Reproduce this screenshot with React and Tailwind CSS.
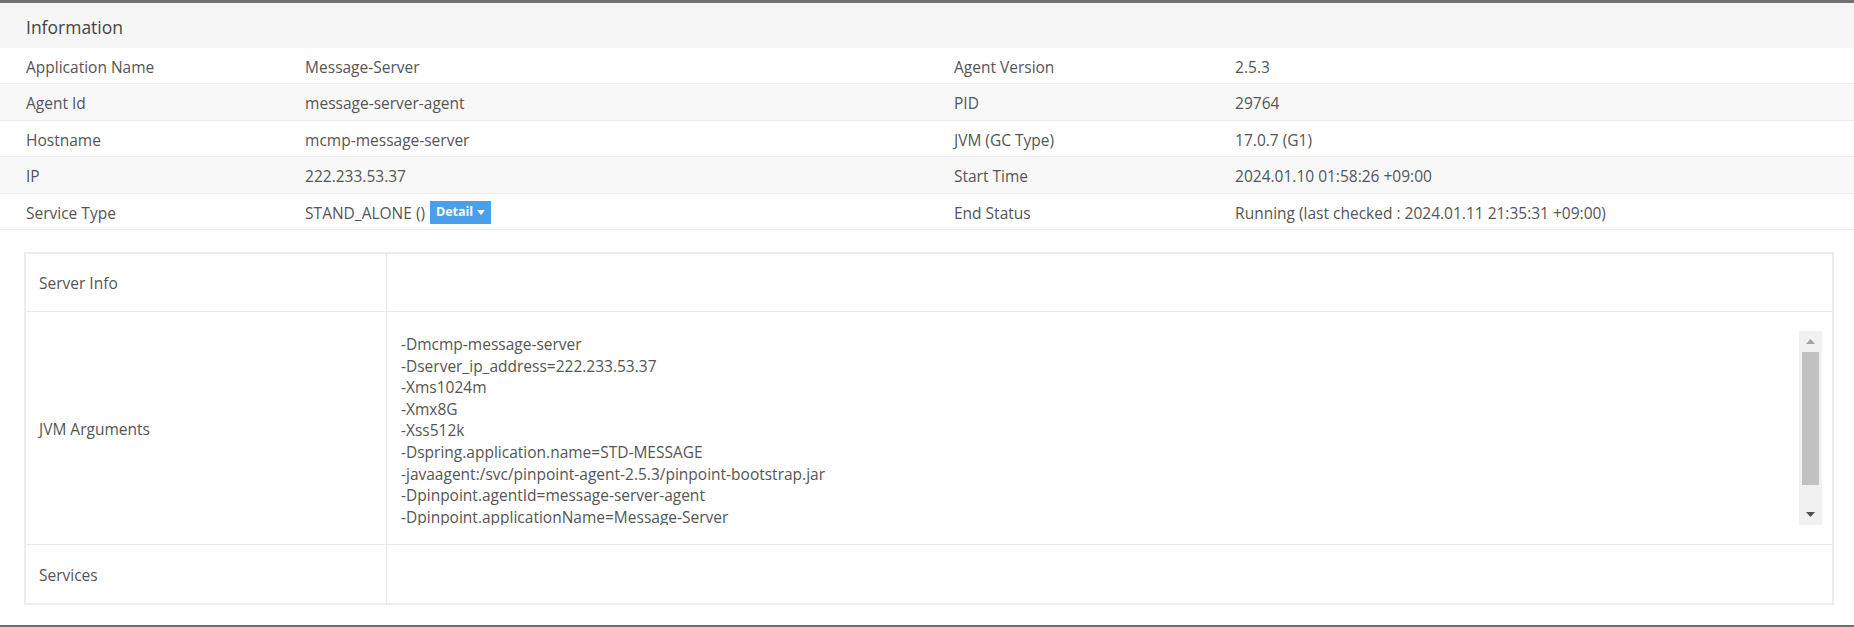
const infoRows = [
  ["Application Name", "Message-Server", "Agent Version", "2.5.3"],
  ["Agent Id", "message-server-agent", "PID", "29764"],
  ["Hostname", "mcmp-message-server", "JVM (GC Type)", "17.0.7 (G1)"],
  ["IP", "222.233.53.37", "Start Time", "2024.01.10 01:58:26 +09:00"],
  ["Service Type", null, "End Status", "Running (last checked : 2024.01.11 21:35:31 +09:00)"],
];

const jvmArgs = [
  "-Dmcmp-message-server",
  "-Dserver_ip_address=222.233.53.37",
  "-Xms1024m",
  "-Xmx8G",
  "-Xss512k",
  "-Dspring.application.name=STD-MESSAGE",
  "-javaagent:/svc/pinpoint-agent-2.5.3/pinpoint-bootstrap.jar",
  "-Dpinpoint.agentId=message-server-agent",
  "-Dpinpoint.applicationName=Message-Server",
];

function DetailButton() {
  return (
    <span className="ml-[5px] inline-flex h-[23px] w-[61px] -translate-y-[1px] items-center justify-center gap-[4px] bg-[#4a9fe8] text-[12.5px] font-bold text-white">
      Detail
      <svg width="8" height="5" viewBox="0 0 8 5">
        <path d="M0 0h8L4 5z" fill="#fff" />
      </svg>
    </span>
  );
}

function ScrollBar() {
  return (
    <div className="flex h-[194px] w-[23px] shrink-0 flex-col items-center bg-[#f1f1f1]">
      <div className="flex h-[21px] items-center justify-center">
        <svg width="9" height="5" viewBox="0 0 9 5">
          <path d="M0 5L4.5 0L9 5z" fill="#a3a3a3" />
        </svg>
      </div>
      <div className="h-[133px] w-[17px] bg-[#c1c1c1]" />
      <div className="flex-1" />
      <div className="flex h-[21px] items-center justify-center">
        <svg width="9" height="5" viewBox="0 0 9 5">
          <path d="M0 0h9L4.5 5z" fill="#505050" />
        </svg>
      </div>
    </div>
  );
}

export default function App() {
  return (
    <div className="flex h-[627px] w-full flex-col border-t-[3px] border-b-2 border-t-[#707070] border-b-[#6e6e6e] bg-white font-['Open_Sans',sans-serif] text-[15.5px] text-[#555]">
      <div className="flex h-[45px] shrink-0 items-center bg-[#f5f5f5] pt-[3px] pl-[26px] text-[17.5px] text-[#444]">
        Information
      </div>

      <div className="shrink-0">
        {infoRows.map((row, i) => (
          <div
            key={row[0]}
            className={`grid h-[36.4px] grid-cols-[15%_35%_15%_35%] items-center border-b border-[#ececec] pt-[4px] ${i % 2 === 1 ? "bg-[#f8f8f8]" : "bg-white"}`}
          >
            <div className="pl-[26px]">{row[0]}</div>
            <div className="flex items-center pl-[27px]">
              {row[1] ?? (
                <>
                  STAND_ALONE ()
                  <DetailButton />
                </>
              )}
            </div>
            <div className="pl-[27px]">{row[2]}</div>
            <div className="pl-[30px]">{row[3]}</div>
          </div>
        ))}
      </div>

      <div className="mt-[22px] ml-[24px] mr-[20px] border-2 border-[#ececec]">
        <div className="grid grid-cols-[361px_1fr]">
          <div className="flex h-[58px] items-center border-r border-b border-[#e8e8e8] pt-[3px] pl-[13px]">Server Info</div>
          <div className="border-b border-[#e8e8e8]" />

          <div className="flex items-center border-r border-b border-[#e8e8e8] pt-[4px] pl-[13px]">JVM Arguments</div>
          <div className="flex h-[233px] border-b border-[#e8e8e8] pt-[19px] pr-[10px] pl-[14px]">
            <div className="h-[194px] flex-1 overflow-hidden pt-[3px] leading-[21.6px]">
              {jvmArgs.map((a) => (
                <div key={a}>{a}</div>
              ))}
            </div>
            <ScrollBar />
          </div>

          <div className="flex h-[58px] items-center border-r border-[#e8e8e8] pt-[4px] pl-[13px]">Services</div>
          <div />
        </div>
      </div>
    </div>
  );
}
